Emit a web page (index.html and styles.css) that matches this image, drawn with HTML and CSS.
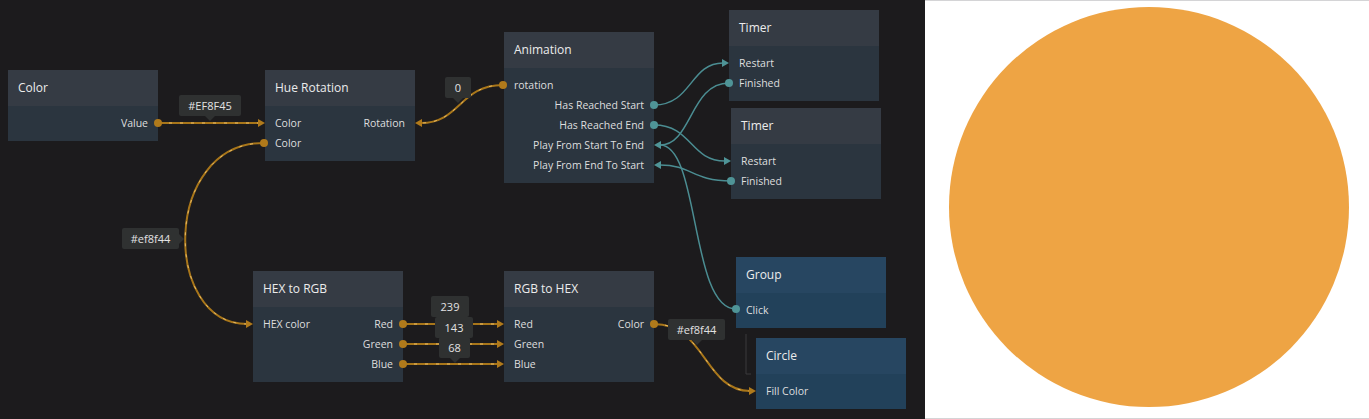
FILE: index.html
```html
<!DOCTYPE html>
<html lang="en">
  <head>
    <meta charset="UTF-8" />
    <link rel="stylesheet" href="styles.css">
    <title>Node Editor - Hue Rotation</title>
  </head>
  <body>
    <div class="canvas">
      <svg class="wires" width="925" height="419" viewBox="0 0 925 419">
        <!-- data wires -->
        <g class="wire data">
          <path d="M158,123 L259,123" />
          <path d="M264,143 C162,143 162,324 247,324" />
          <path d="M503,85 C460,85 460,123 421,123" />
          <path d="M403,324 L498,324" />
          <path d="M403,344 L498,344" />
          <path d="M403,364 L498,364" />
          <path d="M654,324 C705,324 705,391 750,391" />
        </g>
        <g class="wire flow">
          <path d="M158,123 L259,123" />
          <path d="M264,143 C162,143 162,324 247,324" />
          <path d="M503,85 C460,85 460,123 421,123" />
          <path d="M403,324 L498,324" />
          <path d="M403,344 L498,344" />
          <path d="M403,364 L498,364" />
          <path d="M654,324 C705,324 705,391 750,391" />
        </g>
        <!-- signal wires -->
        <g class="wire signal">
          <path d="M654,105 C692,105 690,63 723,63" />
          <path d="M729,83 C690,83 692,145 660,145" />
          <path d="M654,125 C692,125 690,161 725,161" />
          <path d="M731,181 C692,181 692,165 660,165" />
          <path d="M736,309 C690,309 700,145 660,145" />
        </g>
        <g class="arrow data-fill">
          <polygon points="265,123 258,119 258,127" />
          <polygon points="253,324 246,320 246,328" />
          <polygon points="415,123 422,119 422,127" />
          <polygon points="504,324 497,320 497,328" />
          <polygon points="504,344 497,340 497,348" />
          <polygon points="504,364 497,360 497,368" />
          <polygon points="756,391 749,387 749,395" />
        </g>
        <g class="arrow signal-fill">
          <polygon points="729,63 722,59 722,67" />
          <polygon points="731,161 724,157 724,165" />
          <polygon points="654,145 661,141 661,149" />
          <polygon points="654,165 661,161 661,169" />
        </g>
        <g class="dot data-fill">
          <circle cx="158" cy="123" r="4" />
          <circle cx="264" cy="143" r="4" />
          <circle cx="503" cy="85" r="4" />
          <circle cx="403" cy="324" r="4" />
          <circle cx="403" cy="344" r="4" />
          <circle cx="403" cy="364" r="4" />
          <circle cx="654" cy="324" r="4" />
        </g>
        <g class="dot signal-fill">
          <circle cx="654" cy="105" r="4" />
          <circle cx="654" cy="125" r="4" />
          <circle cx="729" cy="83" r="4" />
          <circle cx="731" cy="181" r="4" />
          <circle cx="736" cy="309" r="4" />
        </g>
        <path class="bracket" d="M746,334 L746,374 L751,374" />
      </svg>

      <div class="node" style="left: 8px; top: 70px;">
        <div class="node-title">Color</div>
        <div class="node-body">
          <div class="port"><span></span><span>Value</span></div>
        </div>
      </div>

      <div class="node" style="left: 265px; top: 70px;">
        <div class="node-title">Hue Rotation</div>
        <div class="node-body">
          <div class="port"><span>Color</span><span>Rotation</span></div>
          <div class="port"><span>Color</span><span></span></div>
        </div>
      </div>

      <div class="node" style="left: 504px; top: 32px;">
        <div class="node-title">Animation</div>
        <div class="node-body">
          <div class="port"><span>rotation</span><span></span></div>
          <div class="port"><span></span><span>Has Reached Start</span></div>
          <div class="port"><span></span><span>Has Reached End</span></div>
          <div class="port"><span></span><span>Play From Start To End</span></div>
          <div class="port"><span></span><span>Play From End To Start</span></div>
        </div>
      </div>

      <div class="node" style="left: 729px; top: 10px;">
        <div class="node-title">Timer</div>
        <div class="node-body">
          <div class="port"><span>Restart</span><span></span></div>
          <div class="port"><span>Finished</span><span></span></div>
        </div>
      </div>

      <div class="node" style="left: 731px; top: 108px;">
        <div class="node-title">Timer</div>
        <div class="node-body">
          <div class="port"><span>Restart</span><span></span></div>
          <div class="port"><span>Finished</span><span></span></div>
        </div>
      </div>

      <div class="node" style="left: 253px; top: 271px;">
        <div class="node-title">HEX to RGB</div>
        <div class="node-body">
          <div class="port"><span>HEX color</span><span>Red</span></div>
          <div class="port"><span></span><span>Green</span></div>
          <div class="port"><span></span><span>Blue</span></div>
        </div>
      </div>

      <div class="node" style="left: 504px; top: 271px;">
        <div class="node-title">RGB to HEX</div>
        <div class="node-body">
          <div class="port"><span>Red</span><span>Color</span></div>
          <div class="port"><span>Green</span><span></span></div>
          <div class="port"><span>Blue</span><span></span></div>
        </div>
      </div>

      <div class="node visual" style="left: 736px; top: 257px;">
        <div class="node-title">Group</div>
        <div class="node-body">
          <div class="port"><span>Click</span><span></span></div>
        </div>
      </div>

      <div class="node visual" style="left: 756px; top: 338px;">
        <div class="node-title">Circle</div>
        <div class="node-body">
          <div class="port"><span>Fill Color</span><span></span></div>
        </div>
      </div>

      <div class="tip down" style="left: 179px; top: 95px; width: 62px;">#EF8F45</div>
      <div class="tip down" style="left: 445px; top: 77px; width: 26px;">0</div>
      <div class="tip right" style="left: 122px; top: 228px; width: 57px;">#ef8f44</div>
      <div class="tip" style="left: 431px; top: 296px; width: 38px;">239</div>
      <div class="tip" style="left: 435px; top: 317px; width: 38px;">143</div>
      <div class="tip down" style="left: 439px; top: 337px; width: 31px;">68</div>
      <div class="tip down" style="left: 668px; top: 319px; width: 57px;">#ef8f44</div>
    </div>

    <div class="preview">
      <div class="circle"></div>
    </div>
  </body>
</html>
```

FILE: styles.css
```css
body {
  margin: 0;
  padding: 0;
  width: 1369px;
  height: 419px;
  overflow: hidden;
  display: flex;
  font-family: "Open Sans", sans-serif;
  background-color: #1c1b1d;
}

.canvas {
  position: relative;
  width: 925px;
  height: 419px;
  background-color: #1c1b1d;
}

.wires {
  position: absolute;
  left: 0;
  top: 0;
  z-index: 2;
}

.wire path {
  fill: none;
}

.wire.data path {
  stroke: #a8761a;
  stroke-width: 2;
}

.wire.flow path {
  stroke: #e8bb66;
  stroke-width: 1;
  stroke-dasharray: 3 8;
}

.wire.signal path {
  stroke: #4b8d92;
  stroke-width: 1.5;
}

.data-fill {
  fill: #b07a1b;
}

.signal-fill {
  fill: #4f9497;
}

.bracket {
  fill: none;
  stroke: #3a3a3c;
  stroke-width: 1;
}

.node {
  position: absolute;
  width: 150px;
  z-index: 1;
  color: #dedede;
}

.node-title {
  height: 35px;
  padding: 0 10px 1px;
  display: flex;
  align-items: center;
  font-size: 12px;
  color: #ececec;
  background-color: #383e48;
  background-image: radial-gradient(rgba(0, 0, 0, 0.12) 0.6px, transparent 0.8px);
  background-size: 2px 2px;
}

.node-body {
  padding: 7px 0 8px;
  background-color: #2e3843;
  background-image: radial-gradient(rgba(0, 0, 0, 0.12) 0.6px, transparent 0.8px);
  background-size: 2px 2px;
}

.node.visual .node-title {
  background-color: #294a67;
}

.node.visual .node-body {
  background-color: #24455f;
}

.port {
  height: 20px;
  display: flex;
  align-items: center;
  justify-content: space-between;
  padding: 0 10px;
  font-size: 10.5px;
  white-space: nowrap;
}

.tip {
  position: absolute;
  z-index: 3;
  height: 21px;
  display: flex;
  align-items: center;
  justify-content: center;
  font-size: 11px;
  color: #e2e2e2;
  background-color: #2f3131;
  border-radius: 2px;
}

.tip.down::after {
  content: "";
  position: absolute;
  left: 50%;
  bottom: -5px;
  margin-left: -5px;
  border-left: 5px solid transparent;
  border-right: 5px solid transparent;
  border-top: 5px solid #2f3131;
}

.tip.right::after {
  content: "";
  position: absolute;
  top: 50%;
  right: -5px;
  margin-top: -5px;
  border-top: 5px solid transparent;
  border-bottom: 5px solid transparent;
  border-left: 5px solid #2f3131;
}

.preview {
  flex: 1;
  height: 417px;
  background-color: #ffffff;
  border-top: 1px solid #d4d4d6;
  border-bottom: 1px solid #d4d4d6;
  display: flex;
  align-items: flex-start;
  justify-content: center;
}

.circle {
  width: 400px;
  height: 400px;
  margin-top: 6px;
  margin-left: 3px;
  border-radius: 50%;
  background-color: #eea444;
}
```
